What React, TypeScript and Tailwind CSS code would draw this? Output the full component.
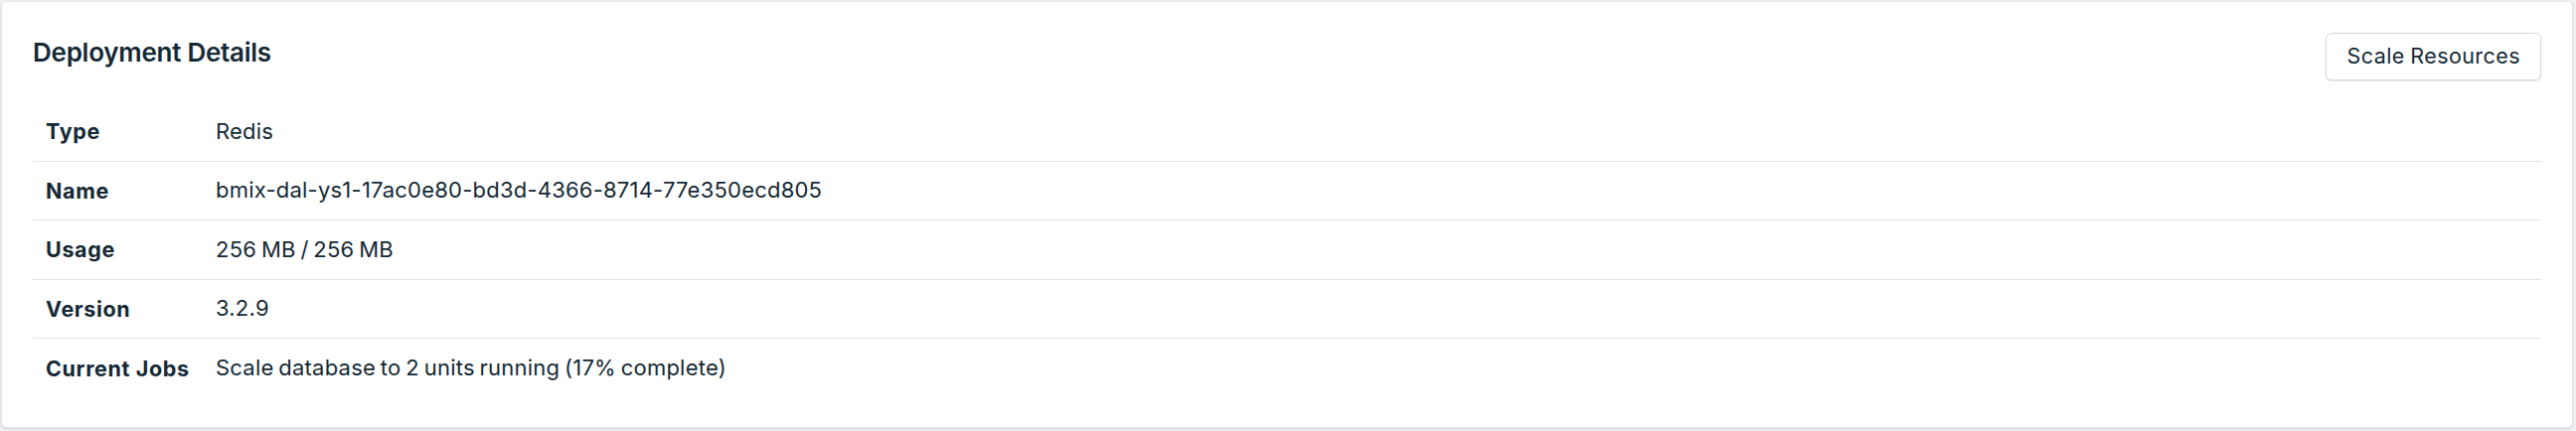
import React from "react";

const rows: [string, string][] = [
  ["Type", "Redis"],
  ["Name", "bmix-dal-ys1-17ac0e80-bd3d-4366-8714-77e350ecd805"],
  ["Usage", "256 MB / 256 MB"],
  ["Version", "3.2.9"],
  ["Current Jobs", "Scale database to 2 units running (17% complete)"],
];

export default function App() {
  return (
    <div
      className="w-[2592px] h-[434px] bg-[#eef0f3] pl-px pt-px pr-[3px] pb-[3px] text-[#152935]"
      style={{ fontFamily: "Inter, 'Noto Sans', sans-serif" }}
    >
      <div className="h-full bg-white border border-[#e1e4e8] rounded-[5px] shadow-[0_1px_2px_rgba(0,0,0,0.12)] px-[31px] pt-[31px]">
        <div className="flex items-start justify-between">
          <h2 className="text-[26px] leading-[40px] font-semibold tracking-[-0.01em]">Deployment Details</h2>
          <button className="h-[48px] px-[20px] border border-[#d5d9de] rounded-[6px] bg-white shadow-[0_1px_2px_rgba(0,0,0,0.1)] text-[21.5px] leading-none tracking-[0.02em] [word-spacing:-1px]">
            Scale Resources
          </button>
        </div>
        <div className="mt-[22px] flex flex-col">
          {rows.map(([k, v], i) => (
            <div
              key={k}
              className={
                "flex items-center h-[59.5px] " +
                (i < rows.length - 1 ? "border-b border-[#e0e3e6]" : "")
              }
            >
              <div className="w-[184px] shrink-0 pl-[13px] font-bold text-[21.5px] tracking-[0.03em]">{k}</div>
              <div className="text-[22px] tracking-[0.01em] [word-spacing:-1.6px]">{v}</div>
            </div>
          ))}
        </div>
      </div>
    </div>
  );
}
